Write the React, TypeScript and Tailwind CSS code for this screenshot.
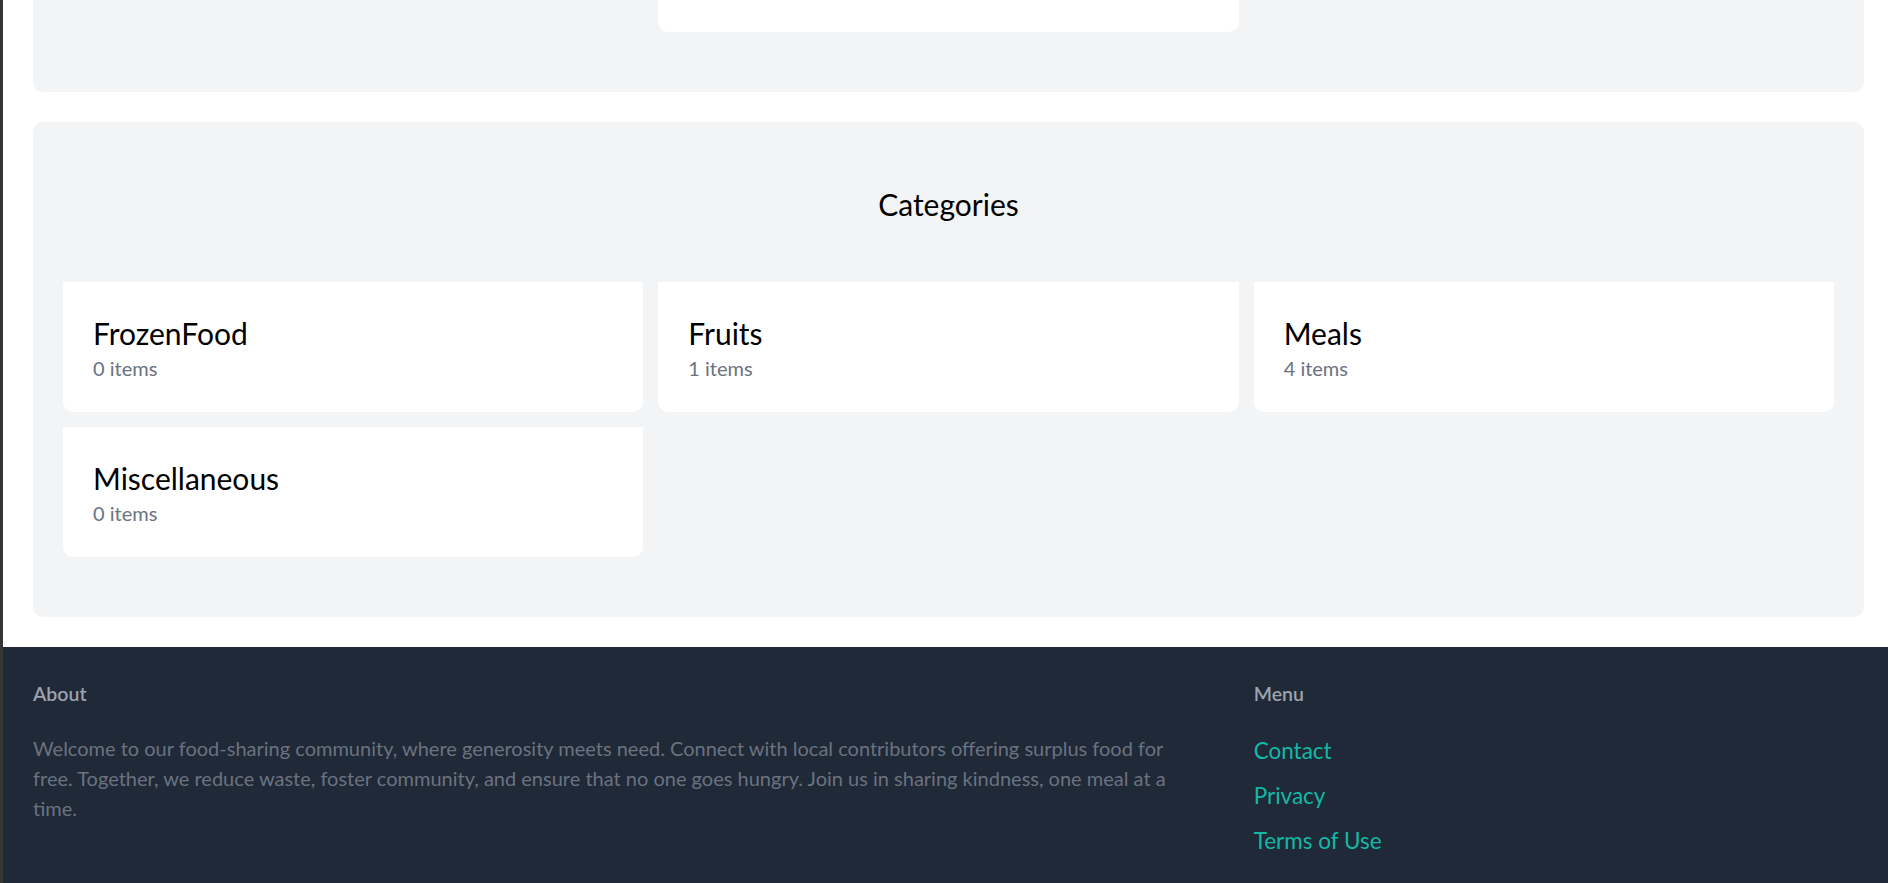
import React from "react";

const categories = [
  { name: "FrozenFood", count: 0 },
  { name: "Fruits", count: 1 },
  { name: "Meals", count: 4 },
  { name: "Miscellaneous", count: 0 },
];

const menuLinks = ["Contact", "Privacy", "Terms of Use"];

const CategoryCard = ({ name, count }: { name: string; count: number }) => (
  <div className="bg-white rounded-b-[10px] px-[30px] pt-[31px] pb-[29px]">
    <h3 className="text-[30px] leading-[40px] text-black">{name}</h3>
    <p className="text-[20px] leading-[30px] text-[#6b7280]">{count} items</p>
  </div>
);

const App = () => {
  return (
    <div className="min-h-screen bg-white border-l-[3px] border-[#363636] font-[Lato,sans-serif]">
      <main className="pl-[30px] pr-[24px]">
        {/* Latest post (scrolled mostly out of view) */}
        <section className="-mt-[158px] bg-gray-100 rounded-[10px] px-[30px] pt-[60px] pb-[60px]">
          <div className="grid grid-cols-3 gap-[15px]">
            <div className="col-start-2 bg-white rounded-b-[10px] p-[30px]">
              <h3 className="text-[30px] leading-[40px] text-black">Sandwiches</h3>
              <p className="text-[20px] leading-[30px] text-[#4b5563]">By a local neighbour giving away</p>
            </div>
          </div>
        </section>

        {/* Categories */}
        <section className="mt-[30px] bg-gray-100 rounded-[10px] px-[30px] pt-[62px] pb-[60px]">
          <h2 className="text-center text-[30px] leading-[40px] text-black mb-[58px]">
            Categories
          </h2>
          <div className="grid grid-cols-3 gap-[15px]">
            {categories.map((c) => (
              <CategoryCard key={c.name} name={c.name} count={c.count} />
            ))}
          </div>
        </section>
      </main>

      <footer className="mt-[30px] bg-[#1f2937] pl-[30px] pr-[24px] pt-[32px] pb-[60px]">
        <div className="grid grid-cols-3">
          <div className="col-span-2">
            <h4 className="text-[19.5px] leading-[30px] font-semibold text-[#9ca3af] mb-[24px]">
              About
            </h4>
            <p className="max-w-[1155px] text-[20px] leading-[30px] text-[#6b7280]">
              Welcome to our food-sharing community, where generosity meets need. Connect with
              local contributors offering surplus food for free. Together, we reduce waste, foster
              community, and ensure that no one goes hungry. Join us in sharing kindness, one meal
              at a time.
            </p>
          </div>
          <div>
            <h4 className="text-[19.5px] leading-[30px] font-semibold text-[#9ca3af] mb-[24px]">
              Menu
            </h4>
            <ul className="flex flex-col gap-[10px]">
              {menuLinks.map((l) => (
                <li key={l}>
                  <a href="#" className="text-[22.5px] leading-[35px] text-[#14b8a6]">
                    {l}
                  </a>
                </li>
              ))}
            </ul>
          </div>
        </div>
      </footer>
    </div>
  );
};

export default App;
